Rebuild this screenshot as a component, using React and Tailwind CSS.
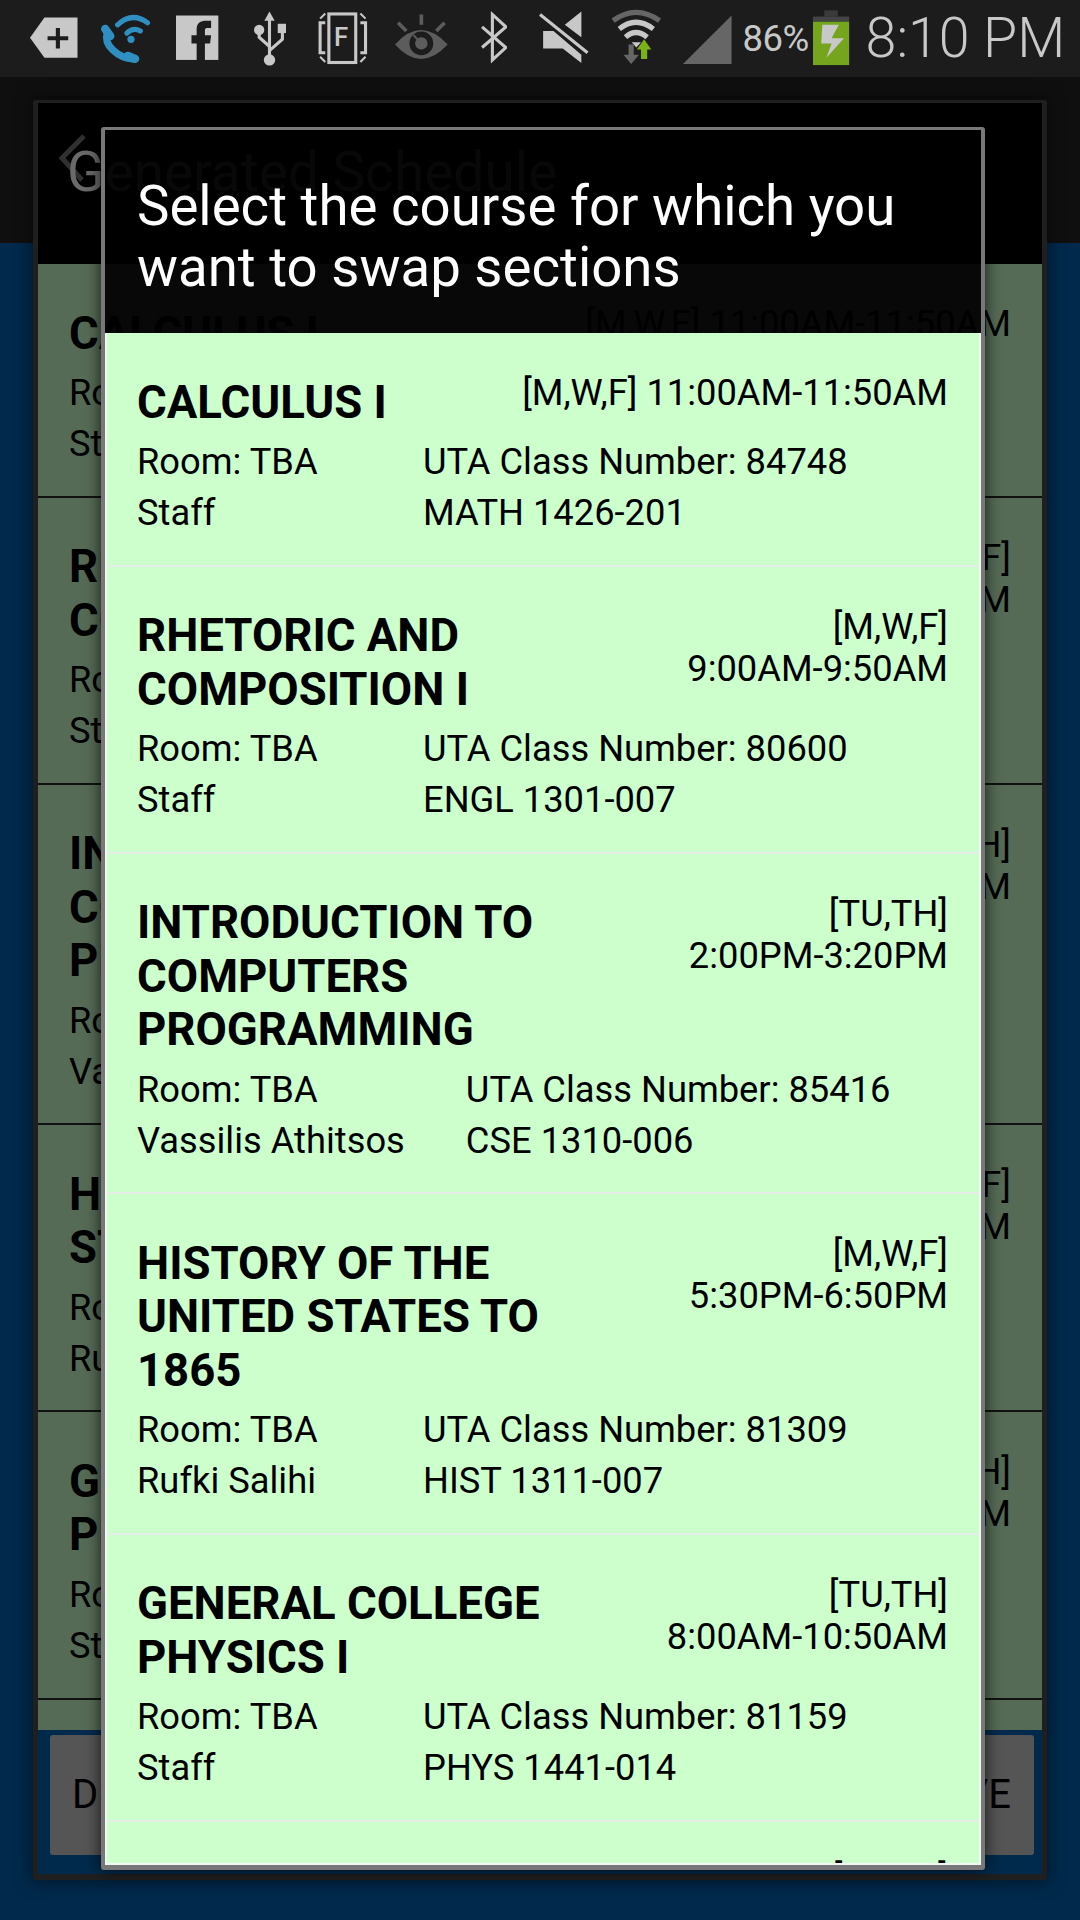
const GRAY = "#c8c8c8";
const DIM = "#666666";

function Icon({ left, width, y = 0, children }) {
  return (
    <svg width={width * 1.033} height={77.5} viewBox={`0 0 ${width} 75`} className="block shrink-0" style={{ marginLeft: left }}>
      <g transform={`translate(0 ${y})`}>{children}</g>
    </svg>
  );
}

function StatusBar() {
  return (
    <div className="flex h-[77px] shrink-0 items-center bg-[#1c1c1c] pl-[30px]">
      <Icon left={0} width={46} y={17}>
        <path d="M14 0H46V39H14L0 19.5Z" fill={GRAY} />
        <path d="M27 10V30M17 20H37" stroke="#1c1c1c" strokeWidth="4" />
      </Icon>
      <Icon left={22.7} width={49} y={13}>
        <g fill="none" stroke="#2e8fc0" strokeLinecap="round">
          <path d="M17 11Q31 -2 46 9" strokeWidth="5" />
          <path d="M26 19Q32 13 39 17" strokeWidth="5" />
          <path d="M7 19C3 31 18 43 31 44" strokeWidth="7" />
          <path d="M5 15L10 22M27 41L34 44" strokeWidth="8" />
        </g>
        <circle cx="30" cy="25" r="3.5" fill="#2e8fc0" />
      </Icon>
      <Icon left={25.6} width={41} y={15}>
        <rect width="41" height="43" fill={GRAY} />
        <path d="M20 43V27H15V19H20V13C20 7 24 5 29 5H34V12H30C28.5 12 28 13 28 14V19H34L33 27H28V43Z" fill="#1c1c1c" />
      </Icon>
      <Icon left={35} width={31} y={11}>
        <path d="M15 0L10 9H20Z" fill={GRAY} />
        <path d="M15 8V45M5 18V25L15 34M27.5 20V27L15 38" fill="none" stroke={GRAY} strokeWidth="3" />
        <circle cx="15" cy="47" r="5.5" fill={GRAY} />
        <circle cx="5" cy="18" r="5" fill={GRAY} />
        <rect x="23" y="12" width="8" height="9" fill={GRAY} />
      </Icon>
      <Icon left={31.5} width={50} y={12}>
        <rect x="11.5" y="1.5" width="26" height="47" fill="none" stroke={GRAY} strokeWidth="3" />
        <text x="16.5" y="33" fontFamily="Roboto, sans-serif" fontSize="25" fontWeight="500" fill={GRAY}>F</text>
        <path d="M8 10H3V39H8M42 10H47V39H42" fill="none" stroke={GRAY} strokeWidth="3" />
        <path d="M3 6L8 1M3 43L8 48M42 1L47 6M42 48L47 43" fill="none" stroke={GRAY} strokeWidth="2" />
      </Icon>
      <Icon left={26} width={51} y={14}>
        <path d="M0 29Q25 1 51 29Q25 57 0 29Z" fill="#5c5c5c" />
        <circle cx="25.5" cy="28" r="11.5" fill="#1c1c1c" />
        <circle cx="25.5" cy="28" r="6" fill="#5c5c5c" />
        <path d="M25.5 0V10M3 8L11 16M48 8L40 16" stroke="#5c5c5c" strokeWidth="3.5" />
        <path d="M18 20L25 28" stroke="#5c5c5c" strokeWidth="2" />
      </Icon>
      <Icon left={32} width={27} y={13}>
        <path d="M2 13L25 33L12 45V1L25 13L2 33" fill="none" stroke={GRAY} strokeWidth="3" />
      </Icon>
      <Icon left={32} width={48} y={0}>
        <path d="M25 24L41 11V36Z" fill={GRAY} />
        <path d="M4 30H14L41 53V61L23 47H4Z" fill={GRAY} />
        <path d="M1 14L47 51" stroke={GRAY} strokeWidth="3" />
      </Icon>
      <Icon left={21.4} width={51} y={9}>
        <g fill="none" strokeWidth="5">
          <path d="M3 11Q25 -5 48 11" stroke={DIM} />
          <path d="M9 19Q25 6 42 19" stroke={GRAY} />
          <path d="M15 27Q25 18 36 27" stroke={GRAY} />
        </g>
        <path d="M21 32H30L25.5 37Z" fill={GRAY} />
        <path d="M18 34H23V44H28L20.5 53L13 44H18Z" fill={DIM} />
        <path d="M33 29L40 39H36V48H30V39H26Z" fill="#7ab317" />
      </Icon>
      <Icon left={20.3} width={47} y={15}>
        <path d="M0 47H47V0Z" fill={DIM} />
      </Icon>
      <div className="ml-[10.5px] w-[64px] font-['Roboto',sans-serif] text-[36.5px] leading-[75px] tracking-[-0.5px] text-[#c8c8c8]">86%</div>
      <Icon left={7} width={35} y={10}>
        <rect x="11" width="13" height="6" fill="#3a3a3a" />
        <rect y="6" width="35" height="5" fill="#444444" />
        <rect y="11" width="35" height="42" fill="#74a51c" />
        <path d="M9 14H25L18 27H30L13 46L18 32H8Z" fill={GRAY} />
      </Icon>
      <div className="ml-[16px] whitespace-nowrap font-['Roboto',sans-serif] text-[55.5px] font-light leading-[75px] text-[#c8c8c8]">8:10 PM</div>
    </div>
  );
}

const COURSES = [
  { title: ["CALCULUS I"], time: ["[M,W,F] 11:00AM-11:50AM"], room: "Room: TBA", who: "Staff", uta: "UTA Class Number: 84748", code: "MATH 1426-201" },
  { title: ["RHETORIC AND", "COMPOSITION I"], time: ["[M,W,F]", "9:00AM-9:50AM"], room: "Room: TBA", who: "Staff", uta: "UTA Class Number: 80600", code: "ENGL 1301-007" },
  { title: ["INTRODUCTION TO", "COMPUTERS", "PROGRAMMING"], time: ["[TU,TH]", "2:00PM-3:20PM"], room: "Room: TBA", who: "Vassilis Athitsos", uta: "UTA Class Number: 85416", code: "CSE 1310-006" },
  { title: ["HISTORY OF THE", "UNITED STATES TO", "1865"], time: ["[M,W,F]", "5:30PM-6:50PM"], room: "Room: TBA", who: "Rufki Salihi", uta: "UTA Class Number: 81309", code: "HIST 1311-007" },
  { title: ["GENERAL COLLEGE", "PHYSICS I"], time: ["[TU,TH]", "8:00AM-10:50AM"], room: "Room: TBA", who: "Staff", uta: "UTA Class Number: 81159", code: "PHYS 1441-014" },
];

const BACK_TITLES = [
  ["CALCULUS I"],
  ["RHETORIC AND", "COMPOSITION I"],
  ["INTRODUCTION TO", "COMPUTERS", "PROGRAMMING"],
  ["HISTORY OF THE UNITED", "STATES TO 1865"],
  ["GENERAL COLLEGE", "PHYSICS I"],
];

function Row({ c, title, dim }) {
  const lines = title || c.title;
  return (
    <div className={dim ? "border-b-2 border-[#111111] bg-[#566b56] pb-[26.8px] pl-[31px] pr-[31px] pt-[39px]" : "border-b-2 border-[#e6ece6] pb-[26.8px] pl-[30px] pr-[31px] pt-[39px]"}>
      <div className="flex justify-between">
        <div className="mt-[3.5px] text-[45.5px] font-bold leading-[53.4px]">
          {lines.map((l) => <div key={l}>{l}</div>)}
        </div>
        <div className="text-right text-[36.3px] leading-[42px]">
          {c.time.map((l) => <div key={l}>{l}</div>)}
        </div>
      </div>
      <div className="mt-[7px] flex text-[36.3px] leading-[51px]">
        <div className="min-w-[286px] pr-[61px]">
          <div>{c.room}</div>
          <div>{c.who}</div>
        </div>
        <div>
          <div>{c.uta}</div>
          <div>{c.code}</div>
        </div>
      </div>
    </div>
  );
}

function BackDialog() {
  return (
    <div className="absolute left-[33px] top-[100px] flex h-[1780px] w-[1014px] flex-col rounded-[3px] border-x-[5px] border-b-[6px] border-t-[3px] border-[#1f1f1f] shadow-[0_0_18px_rgba(0,0,0,0.55)]">
      <div className="relative h-[161px] shrink-0 bg-black">
        <svg width="40" height="60" viewBox="0 0 40 60" className="absolute left-[16px] top-[30px]">
          <path d="M30 3L8 25L28 47" fill="none" stroke="#303030" strokeWidth="5" />
        </svg>
        <div className="relative pl-[29px] pt-[39px] text-[55px] leading-[60px] text-[#6a6a6a]">Generated Schedule</div>
      </div>
      <div className="h-[1466px] shrink-0 overflow-hidden text-black">
        {COURSES.map((c, i) => <Row key={c.code} c={c} title={BACK_TITLES[i]} dim />)}
        <div className="h-[40px] bg-[#566b56]" />
      </div>
      <div className="flex min-h-0 flex-1 gap-[8px] bg-[#002a4c] pl-[12px] pr-[8px] pt-[5px]">
        <div className="flex h-[120px] flex-1 items-center rounded-[3px] bg-[#555555] pl-[22px] text-[40px]">DISCARD</div>
        <div className="flex h-[120px] flex-1 items-center justify-end rounded-[3px] bg-[#555555] pr-[23px] text-[40px]">SAVE</div>
      </div>
    </div>
  );
}

function FrontDialog() {
  return (
    <div className="absolute left-[101px] top-[127px] flex h-[1743px] w-[884px] flex-col overflow-hidden rounded-[3px] border-x-4 border-b-[5px] border-t-[3px] border-[#787878] shadow-[0_0_16px_rgba(0,0,0,0.75)]">
      <div className="h-[203px] shrink-0 bg-black/[0.92] pl-[32px] pt-[46px] text-[54.6px] leading-[61px] text-white">
        <div>Select the course for which you</div>
        <div>want to swap sections</div>
      </div>
      <div className="min-h-0 flex-1 overflow-hidden border-x-2 border-b-2 border-[#f0f6f0] bg-[#ccffcc] text-black">
        {COURSES.map((c) => <Row key={c.code} c={c} />)}
        <div className="pr-[31px] pt-[35px] text-right text-[36.3px] leading-[42px]">[M,W,F]</div>
      </div>
    </div>
  );
}

export default function App() {
  return (
    <div className="relative flex h-[1920px] w-[1080px] flex-col overflow-hidden bg-[#00294b] font-['Roboto',sans-serif]">
      <StatusBar />
      <div className="h-[166px] shrink-0 bg-[#0f0f0f]" />
      <BackDialog />
      <FrontDialog />
    </div>
  );
}
